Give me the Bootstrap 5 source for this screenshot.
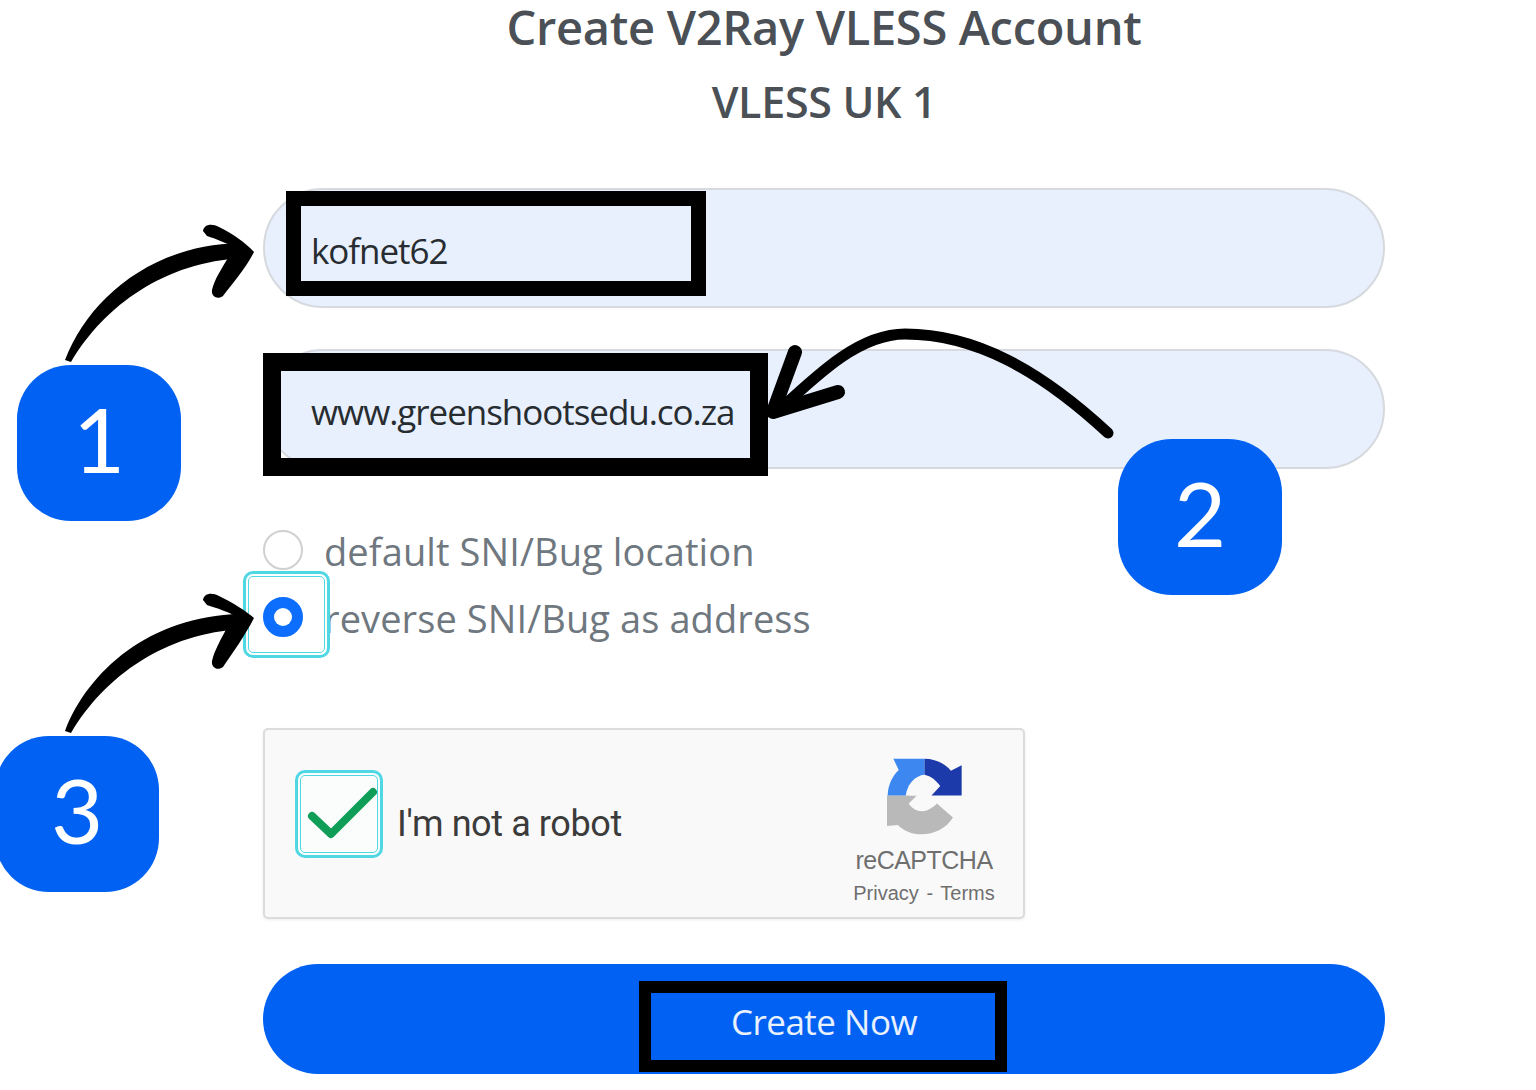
<!DOCTYPE html>
<html lang="en">
<head>
<meta charset="utf-8">
<title>Create V2Ray VLESS Account</title>
<link href="https://cdn.jsdelivr.net/npm/bootstrap@5.3.0/dist/css/bootstrap.min.css" rel="stylesheet">
<style>
html,body{height:1090px;overflow:hidden;background:#fff}
body{position:relative;font-family:"Open Sans","Liberation Sans",sans-serif}
.sheet{width:1122px;margin-left:263px}
.title-a{font-size:47px;font-weight:600;line-height:54px;color:#4a5056;margin:0;letter-spacing:-.3px}
.title-b{font-size:43px;font-weight:600;line-height:54px;color:#4a5056;margin:21px 0 0;letter-spacing:-.3px}
.pill-input.form-control{height:120px;border-radius:60px;background:#e8f0fe;border:2px solid #d6d9de;padding:4px 0 0 46px;font-size:35px;color:#272c30;letter-spacing:-1.05px;box-shadow:none}
.first-field{margin-top:59px;margin-bottom:41px}
.choices{margin-top:47px}
.choice.form-check{display:flex;align-items:center;min-height:0;padding:0;margin:0;height:67px}
.choice .form-check-input{width:40px;height:40px;margin:0;float:none;flex:none;border:2px solid #d0d0d0}
.choice .form-check-input:checked{background-color:#0d6efd;border-color:#0d6efd}
.choice .form-check-label{margin:4px 0 0 21px;font-size:38px;color:#6f777f;letter-spacing:.1px}
.captcha{width:762px;height:191px;margin-top:78px;background:#f9f9f9;border:2px solid #dcdcdc;border-radius:5px;box-shadow:0 1px 3px rgba(0,0,0,.08);padding:0 27px 0 30px}
.tick-box{width:88px;height:88px;flex:none;margin-top:-20px;padding-left:7px;border:3px solid #4fd8e4;outline:1px solid #4fd8e4;outline-offset:-6px;border-radius:10px;background:#fbfdfd}
.captcha-text{font-family:Roboto,"Liberation Sans",sans-serif;font-size:36px;color:#3b3b3b;margin-left:14px;letter-spacing:-.4px}
.captcha-brand{width:144px;margin-top:15px;font-family:"Liberation Sans",Arial,sans-serif;color:#6f6f6f}
.brand-name{font-size:25px;line-height:30px;margin-top:9px;letter-spacing:-.5px}
.brand-links{font-size:20px;line-height:26px;margin-top:5px;word-spacing:2px;white-space:nowrap}
.go-btn.btn{height:110px;border-radius:55px;background:#0061f2;border:0;color:#e9f1ff;font-size:35px;margin-top:45px;padding-top:12px;letter-spacing:-.5px}
.step{position:absolute;width:164px;height:156px;border-radius:54px;background:#0061f2;color:#fff;font-size:90px;line-height:146px;text-align:center;font-family:Lato,sans-serif;font-weight:400}
.step-one{left:17px;top:365px}
.step-two{left:1118px;top:439px}
.step-three{left:-5px;top:736px}
.mark-box{position:absolute;border-style:solid;border-color:#000;pointer-events:none}
.mark-one{left:286px;top:191px;width:420px;height:105px;border-width:15px}
.mark-two{left:263px;top:353px;width:505px;height:123px;border-width:18px}
.mark-three{left:639px;top:981px;width:368px;height:91px;border-width:12px}
.halo{position:absolute;left:243px;top:571px;width:87px;height:87px;border:3px solid #4fd8e4;outline:1px solid #4fd8e4;outline-offset:-6px;border-radius:10px}
.arrows{position:absolute;left:0;top:0;width:1536px;height:1090px;pointer-events:none}
</style>
</head>
<body>
<main class="sheet">
  <h2 class="title-a text-center">Create V2Ray VLESS Account</h2>
  <h3 class="title-b text-center">VLESS UK 1</h3>
  <form>
    <input class="form-control pill-input first-field" type="text" value="kofnet62" aria-label="Username">
    <input class="form-control pill-input" type="text" value="www.greenshootsedu.co.za" aria-label="SNI">
    <div class="choices">
      <div class="form-check choice">
        <input class="form-check-input" type="radio" name="sni" id="sniDefault">
        <label class="form-check-label" for="sniDefault">default SNI/Bug location</label>
      </div>
      <div class="form-check choice">
        <input class="form-check-input" type="radio" name="sni" id="sniReverse" checked>
        <label class="form-check-label" for="sniReverse">reverse SNI/Bug as address</label>
      </div>
    </div>
    <div class="captcha d-flex align-items-center justify-content-between">
      <div class="d-flex align-items-center">
        <div class="tick-box d-flex align-items-center justify-content-center">
          <svg width="72" height="56" viewBox="0 0 72 56"><path d="M5 30 L24 48 L66 6" fill="none" stroke="#0f9d58" stroke-width="8" stroke-linecap="round" stroke-linejoin="round"/></svg>
        </div>
        <span class="captcha-text">I'm not a robot</span>
      </div>
      <div class="captcha-brand text-center">
        <svg width="77" height="79" viewBox="200 85 230 236">
          <path fill="#b9b9b9" d="M203 200 H292 L268 224 C280 245 305 252 325 243 C336 238 345 232 352 224 L400 266 C380 298 345 316 305 316 C277 316 252 305 235 288 L203 291 Z"/>
          <path fill="#3d87f0" d="M205 200 C206 170 218 143 238 124 L222 90 H315 V138 C288 140 264 165 259 200 Z"/>
          <path fill="#1c3aa9" d="M315 90 C347 90 375 104 394 126 L426 110 V200 H336 L362 172 C350 155 335 142 315 138 Z"/>
          <path fill="#f9f9f9" d="M268 168 L296 184 L292 200 H270 Z"/>
        </svg>
        <div class="brand-name">reCAPTCHA</div>
        <div class="brand-links">Privacy - Terms</div>
      </div>
    </div>
    <button type="button" class="btn btn-primary go-btn w-100">Create Now</button>
  </form>
</main>

<div class="halo"></div>
<div class="mark-box mark-one"></div>
<div class="mark-box mark-two"></div>
<div class="mark-box mark-three"></div>

<svg class="arrows" viewBox="0 0 1536 1090" aria-hidden="true">
  <path d="M65 360 C88 300 150 245 240 243 L243 258 C165 262 105 305 71 362 Z" fill="#000"/>
  <path d="M203 231 C204 224 212 223 219 227 C232 233 246 243 254 252 C246 268 232 284 223 296 C218 300 211 297 212 290 C214 280 222 268 228 258 L238 250 C230 244 216 239 207 236 Z" fill="#000"/>
  <path d="M65 731 C88 671 150 616 240 614 L243 629 C165 633 105 676 71 733 Z" fill="#000"/>
  <path d="M203 600 C204 593 212 592 219 596 C232 602 246 611 254 618 C246 634 232 654 223 667 C218 671 211 668 212 661 C214 651 222 637 228 626 L238 618 C230 612 216 608 207 605 Z" fill="#000"/>
  <path d="M1108 433 C1040 370 975 334 905 334 C860 334 820 372 777 412" fill="none" stroke="#000" stroke-width="11" stroke-linecap="round"/>
  <path d="M795 352 L773 412 L838 392" fill="none" stroke="#000" stroke-width="14" stroke-linecap="round" stroke-linejoin="round"/>
</svg>

<div class="step step-one">1</div>
<div class="step step-two">2</div>
<div class="step step-three">3</div>

<script src="https://cdn.jsdelivr.net/npm/bootstrap@5.3.0/dist/js/bootstrap.bundle.min.js"></script>
</body>
</html>
